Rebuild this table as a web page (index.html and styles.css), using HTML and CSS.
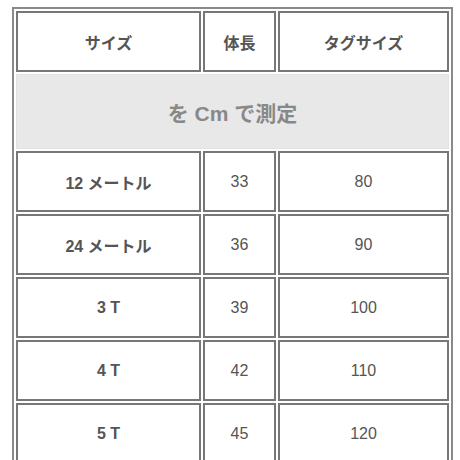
FILE: index.html
```html
<!DOCTYPE html>
<html lang="ja">
<head>
<meta charset="utf-8">
<link rel="stylesheet" href="styles.css">
</head>
<body>
<table class="size-table">
  <colgroup>
    <col class="c1">
    <col class="c2">
    <col class="c3">
  </colgroup>
  <tr class="row">
    <th>サイズ</th>
    <th>体長</th>
    <th>タグサイズ</th>
  </tr>
  <tr class="unit-row">
    <th colspan="3" class="unit">を Cm で測定</th>
  </tr>
  <tr class="row"><th>12 メートル</th><td>33</td><td>80</td></tr>
  <tr class="row"><th>24 メートル</th><td>36</td><td>90</td></tr>
  <tr class="row"><th>3 T</th><td>39</td><td>100</td></tr>
  <tr class="row"><th>4 T</th><td>42</td><td>110</td></tr>
  <tr class="row"><th>5 T</th><td>45</td><td>120</td></tr>
</table>
</body>
</html>
```
FILE: styles.css
```css
html, body {
  margin: 0;
  padding: 0;
  background: #fff;
}
body {
  padding: 7px 0 0 12px;
  font-family: "Liberation Sans", "Noto Sans CJK JP", sans-serif;
  color: #555;
}
.size-table {
  width: 441px;
  table-layout: fixed;
  border-collapse: separate;
  border-spacing: 2px;
  border: 2px solid #8a8a8a;
}
.c1 { width: 185px; }
.c2 { width: 73px; }
.c3 { width: 171px; }
.size-table th,
.size-table td {
  box-sizing: border-box;
  border: 2px solid #777;
  height: 61px;
  padding: 0;
  text-align: center;
  vertical-align: middle;
  font-size: 16px;
  color: #555;
}
.size-table th {
  font-weight: bold;
}
.size-table td {
  font-weight: normal;
}
.size-table .unit {
  height: 75px;
  background: #e8e8e8;
  border: 1px solid #e2e2e2;
  font-size: 21px;
  color: #888;
  font-weight: bold;
}
```
